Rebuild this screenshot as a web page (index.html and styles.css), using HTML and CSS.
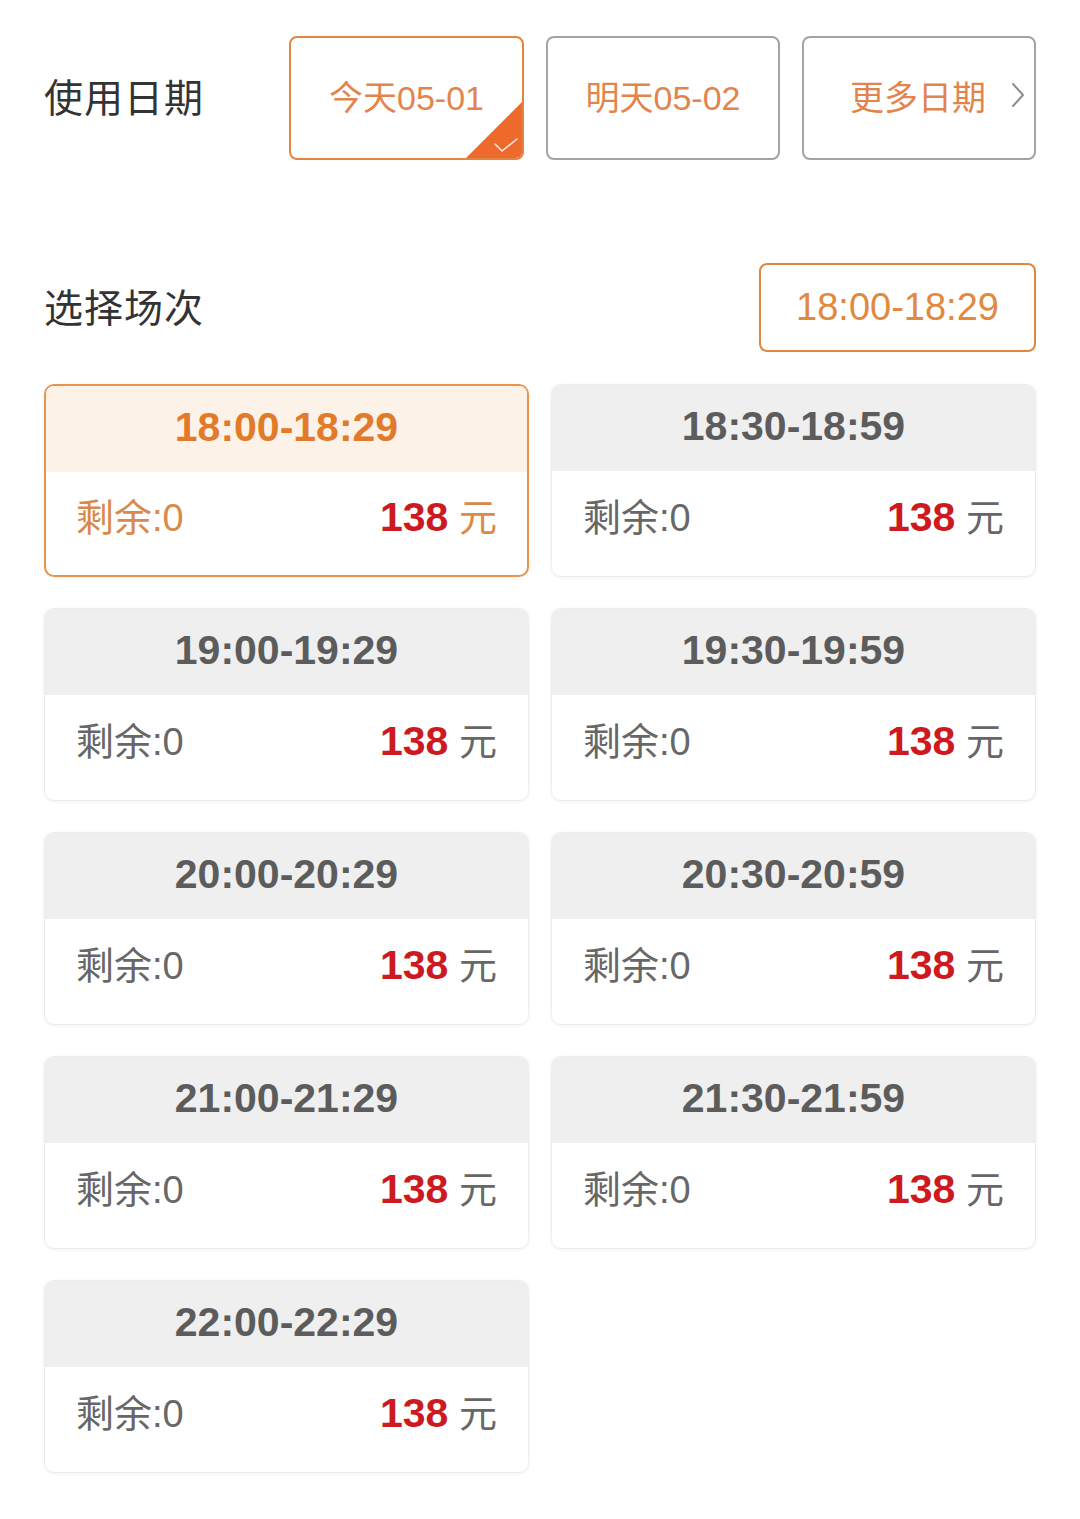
FILE: index.html
```html
<!DOCTYPE html>
<html lang="zh-CN">
<head>
<meta charset="utf-8">
<title>选择场次</title>
<link rel="stylesheet" href="styles.css">
</head>
<body>
<div class="page">
  <section class="row date-row">
    <h2 class="label">使用日期</h2>
    <div class="dates">
      <div class="date-btn active">
        <span>今天05-01</span>
        <span class="corner">
          <svg viewBox="0 0 56 56" width="56" height="56"><polygon points="56,0 56,56 0,56" fill="#ee6a2c"/><polyline points="29,42 36,49 51,37" fill="none" stroke="#fff" stroke-width="1.6" stroke-linecap="round" stroke-linejoin="round" opacity="0.85"/></svg>
        </span>
      </div>
      <div class="date-btn">
        <span>明天05-02</span>
      </div>
      <div class="date-btn more">
        <span>更多日期</span>
        <svg class="chev" viewBox="0 0 16 28" width="16" height="28"><polyline points="3,3 13,14 3,25" fill="none" stroke="#8c8c8c" stroke-width="2" stroke-linecap="round" stroke-linejoin="round"/></svg>
      </div>
    </div>
  </section>

  <section class="row session-row">
    <h2 class="label">选择场次</h2>
    <div class="badge">18:00-18:29</div>
  </section>

  <div class="grid">
    <div class="card selected">
      <div class="card-head">18:00-18:29</div>
      <div class="card-body"><span class="left">剩余:0</span><span class="price"><b>138</b> 元</span></div>
    </div>
    <div class="card">
      <div class="card-head">18:30-18:59</div>
      <div class="card-body"><span class="left">剩余:0</span><span class="price"><b>138</b> 元</span></div>
    </div>
    <div class="card">
      <div class="card-head">19:00-19:29</div>
      <div class="card-body"><span class="left">剩余:0</span><span class="price"><b>138</b> 元</span></div>
    </div>
    <div class="card">
      <div class="card-head">19:30-19:59</div>
      <div class="card-body"><span class="left">剩余:0</span><span class="price"><b>138</b> 元</span></div>
    </div>
    <div class="card">
      <div class="card-head">20:00-20:29</div>
      <div class="card-body"><span class="left">剩余:0</span><span class="price"><b>138</b> 元</span></div>
    </div>
    <div class="card">
      <div class="card-head">20:30-20:59</div>
      <div class="card-body"><span class="left">剩余:0</span><span class="price"><b>138</b> 元</span></div>
    </div>
    <div class="card">
      <div class="card-head">21:00-21:29</div>
      <div class="card-body"><span class="left">剩余:0</span><span class="price"><b>138</b> 元</span></div>
    </div>
    <div class="card">
      <div class="card-head">21:30-21:59</div>
      <div class="card-body"><span class="left">剩余:0</span><span class="price"><b>138</b> 元</span></div>
    </div>
    <div class="card">
      <div class="card-head">22:00-22:29</div>
      <div class="card-body"><span class="left">剩余:0</span><span class="price"><b>138</b> 元</span></div>
    </div>
  </div>
</div>
</body>
</html>
```

FILE: styles.css
```css
* { box-sizing: border-box; }
html, body {
  margin: 0;
  padding: 0;
  background: #ffffff;
}
body {
  font-family: "Liberation Sans", "Noto Sans CJK SC", sans-serif;
  color: #333;
}
.page {
  padding: 36px 44px 40px 44px;
}
.row {
  display: flex;
  align-items: center;
  justify-content: space-between;
}
.label {
  margin: 0;
  padding-bottom: 6px;
  font-family: "Noto Sans CJK SC", sans-serif;
  font-weight: 400;
  font-size: 39px;
  color: #333;
  letter-spacing: 1px;
}
.dates {
  display: flex;
  gap: 22px;
}
.date-btn {
  position: relative;
  width: 234px;
  height: 124px;
  border: 2px solid #a3a3a3;
  border-radius: 8px;
  display: flex;
  align-items: center;
  justify-content: center;
  padding-bottom: 6px;
  font-size: 34px;
  color: #e3844c;
  overflow: hidden;
}
.date-btn.active {
  border-color: #e5843f;
  width: 235px;
}
.date-btn.more {
  justify-content: flex-end;
  padding-right: 8px;
}
.date-btn.more .chev {
  margin-left: 24px;
}
.corner {
  position: absolute;
  right: 0;
  bottom: 0;
  width: 56px;
  height: 56px;
  line-height: 0;
}
.session-row {
  margin-top: 103px;
}
.badge {
  width: 277px;
  height: 89px;
  border: 2px solid #e0863f;
  border-radius: 8px;
  display: flex;
  align-items: center;
  justify-content: center;
  font-size: 38px;
  color: #e0893f;
}
.grid {
  margin-top: 32px;
  display: grid;
  grid-template-columns: 1fr 1fr;
  column-gap: 22px;
  row-gap: 31px;
}
.card {
  height: 193px;
  border: 1px solid #ececec;
  border-radius: 10px;
  overflow: hidden;
  background: #fff;
  box-shadow: 0 1px 4px rgba(0,0,0,0.05);
  display: flex;
  flex-direction: column;
}
.card-head {
  height: 86px;
  flex: none;
  background: #efefef;
  display: flex;
  align-items: center;
  justify-content: center;
  font-size: 41px;
  font-weight: 700;
  color: #5c5c5c;
  padding-bottom: 4px;
}
.card-body {
  flex: 1;
  display: flex;
  align-items: center;
  justify-content: space-between;
  padding: 0 31px 18px 31px;
  font-size: 38px;
  color: #676767;
}
.price b {
  font-size: 41px;
  font-weight: 700;
  color: #cc1a20;
}
.card.selected {
  border: 2px solid #e8944f;
}
.card.selected .card-head {
  background: #fdf2e8;
  color: #e27a2b;
}
.card.selected .card-body {
  color: #d98a4a;
  padding: 0 30px 18px 30px;
}
```
